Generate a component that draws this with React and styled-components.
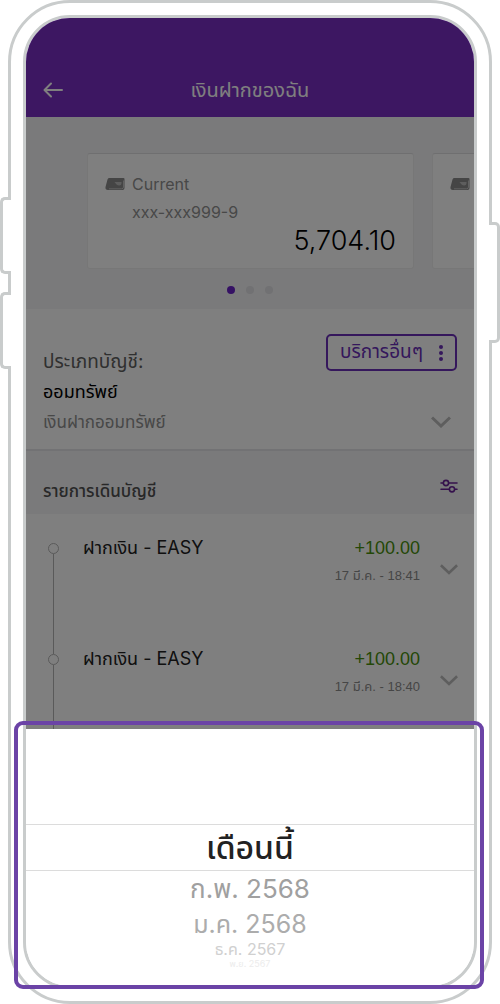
import React from "react";
import styled, { createGlobalStyle } from "styled-components";

const GlobalStyle = createGlobalStyle`
  * {
    box-sizing: border-box;
  }

  body {
    margin: 0;
    background: #ffffff;
    font-family: Inter, "Noto Sans Thai", sans-serif;
  }

  h1, h2, p, ul {
    margin: 0;
    padding: 0;
    font-weight: 400;
  }

  ul {
    list-style: none;
  }

  button {
    padding: 0;
    border: 0;
    background: none;
    font: inherit;
    color: inherit;
    cursor: pointer;
  }

  svg {
    display: block;
  }
`;

const Phone = styled.div`
  position: relative;
  margin: 0 8px;
  padding: 12px;
  border: 3px solid #c9cccc;
  border-radius: 62px;
  background: #ffffff;
`;

const SideKey = styled.span`
  position: absolute;
  top: ${({ $top }) => $top}px;
  ${({ $side }) => $side}: -11px;
  width: 11px;
  height: ${({ $height }) => $height}px;
  border: 3px solid #c9cccc;
  border-${({ $side }) => ($side === "left" ? "right" : "left")}: 0;
  border-radius: ${({ $side }) =>
    $side === "left" ? "5px 0 0 5px" : "0 5px 5px 0"};
  background: #ffffff;
`;

const Screen = styled.div`
  border: 3px solid #c9cccc;
  border-radius: 47px;
  overflow: hidden;
`;

const Account = styled.main`
  position: relative;
`;

const Backdrop = styled.div`
  position: absolute;
  inset: 0;
  background: rgba(0, 0, 0, 0.5);
`;

const Header = styled.header`
  display: grid;
  grid-template-columns: 46px 1fr 46px;
  align-items: center;
  height: 99px;
  padding: 45px 4px 0;
  background: #7a2ec4;
  color: #ffffff;

  button {
    justify-self: center;
  }

  h1 {
    font-size: 20px;
    line-height: 28px;
    text-align: center;
  }
`;

const Carousel = styled.section`
  padding: 36px 0 15px 61px;
  background: #f4f4f7;
  overflow: hidden;
`;

const Cards = styled.div`
  display: flex;
  gap: 18px;
`;

const Card = styled.article`
  flex: 0 0 84.5%;
  height: 116px;
  padding: 16px 17px 10px;
  border: 1px solid #eeeeee;
  border-top-color: #dedee0;
  border-radius: 3px;
  background: #ffffff;
`;

const CardName = styled.h2`
  display: flex;
  align-items: center;
  gap: 7px;
  min-height: 28px;
  font-size: 16px;
  line-height: 28px;
  color: #909090;
`;

const CardNumber = styled.p`
  padding-left: 27px;
  font-size: 16px;
  line-height: 28px;
  color: #909090;
`;

const Balance = styled.p`
  font-size: 27px;
  font-weight: 300;
  line-height: 30px;
  text-align: right;
  color: #000000;
`;

const Dots = styled.div`
  display: flex;
  justify-content: center;
  gap: 11px;
  padding: 17px 61px 0 0;
`;

const Dot = styled.span`
  width: 8px;
  height: 8px;
  border-radius: 50%;
  background: ${({ $active }) => ($active ? "#6a22c8" : "#e2e2e6")};
`;

const Type = styled.section`
  display: grid;
  grid-template-columns: 1fr auto;
  padding: 25px 17px 12px;
  border-bottom: 2px solid #e4e4e8;
  background: #ffffff;

  button {
    align-self: end;
    justify-self: end;
  }
`;

const TypeText = styled.p`
  font-size: ${({ $size }) => $size}px;
  line-height: 30px;
  color: ${({ $color }) => $color};
`;

const TypeNames = styled.div`
  padding-top: 13px;
`;

const TypeActions = styled.div`
  display: flex;
  flex-direction: column;
  justify-content: space-between;
`;

const Services = styled.button`
  && {
    display: flex;
    align-items: center;
    gap: 16px;
    height: 37px;
    padding: 0 12px;
    border: 2px solid #6a2fb8;
    border-radius: 5px;
    font-size: 19px;
    color: #6a2fb8;
  }
`;

const Expand = styled.button`
  && {
    padding: 9px 6px;
  }
`;

const ListHead = styled.div`
  display: flex;
  align-items: center;
  justify-content: space-between;
  height: 63px;
  padding: 16px 16px 0 17px;
  background: #f4f4f7;

  h2 {
    font-size: 17px;
    font-weight: 500;
    line-height: 28px;
    color: #505050;
  }

  button {
    padding-bottom: 10px;
  }
`;

const Transactions = styled.ul`
  height: 215px;
  padding: 20px 16px 0 23px;
  background: #ffffff;
  overflow: hidden;
`;

const Transaction = styled.li`
  display: grid;
  grid-template-columns: 9px 1fr auto 18px;
  column-gap: 20px;
  height: 111px;
  line-height: 28px;
  font-size: 18px;
  color: #202020;

  > p {
    padding-left: 5px;
  }

  > button {
    align-self: start;
    padding-top: 30px;
  }
`;

const Rail = styled.span`
  display: flex;
  flex-direction: column;
  align-items: center;
  padding-top: 9px;
  margin-bottom: -9px;

  &::before {
    content: "";
    width: 9px;
    height: 9px;
    border: 1px solid #b4b4b4;
    border-radius: 50%;
  }

  &::after {
    content: "";
    flex: 1;
    width: 1px;
    background: #b4b4b4;
  }
`;

const Amount = styled.div`
  font-family: "Liberation Sans", "Noto Sans Thai", sans-serif;
  text-align: right;
  color: #48900c;

  time {
    display: block;
    font-size: 13px;
    color: #8c8c8c;
  }
`;

const Sheet = styled.section`
  height: 257px;
  padding-top: 95px;
  background: #ffffff;
  text-align: center;
`;

const Month = styled.button`
  && {
    display: block;
    width: 100%;
    height: ${({ $height }) => $height}px;
    font-size: ${({ $size }) => $size}px;
    line-height: ${({ $height }) => $height}px;
    color: ${({ $color }) => $color};
  }

  &&[aria-selected="true"] {
    border: solid #dcdcdc;
    border-width: 1px 0;
    font-weight: 500;
    line-height: 45px;
  }
`;

// outline around the month picker
const Highlight = styled.div`
  position: absolute;
  left: 3px;
  right: 5px;
  bottom: 12px;
  height: 268px;
  border: 4px solid #6b43a6;
  border-radius: 9px;
  pointer-events: none;
`;

const transactions = [
  { id: 1, name: "ฝากเงิน - EASY", amount: "+100.00", date: "17 มี.ค. - 18:41" },
  { id: 2, name: "ฝากเงิน - EASY", amount: "+100.00", date: "17 มี.ค. - 18:40" },
];

const months = [
  { label: "เดือนนี้", height: 47, size: 32, color: "#222222" },
  { label: "ก.พ. 2568", height: 36, size: 26, color: "#a0a0a0" },
  { label: "ม.ค. 2568", height: 34, size: 25, color: "#acacac" },
  { label: "ธ.ค. 2567", height: 16, size: 16, color: "#d0d0d0" },
  { label: "พ.ย. 2567", height: 14, size: 9, color: "#ececec" },
];

const BackIcon = () => (
  <svg width="20" height="16" viewBox="0 0 20 16" fill="none" stroke="currentColor" strokeWidth="2" strokeLinecap="round" strokeLinejoin="round">
    <path d="M19 8H1.5M8 1.5L1.5 8L8 14.5" />
  </svg>
);

const CardIcon = () => (
  <svg width="20" height="14" viewBox="0 0 20 14">
    <path d="M4 1H18.5Q19.5 1 19.5 2V11Q19.5 13 17.5 13H3Q0 13 0.5 10L2.5 2.5Q2.8 1 4 1Z" fill="#8a8a8a" />
    <path d="M4 11.8H16.5Q18.5 11.8 18.5 10V3.5" fill="none" stroke="#d0d0d0" strokeWidth="0.8" />
    <path d="M9.5 5H16.5Q16.8 8.5 14 8.5Q12 8.5 9.5 5Z" fill="#bdbdbd" />
  </svg>
);

const ChevronIcon = ({ size }) => (
  <svg width={size} height={size * 0.6} viewBox="0 0 20 12" fill="none" stroke="#bcbcbc" strokeWidth="3">
    <path d="M1 1.5L10 10L19 1.5" />
  </svg>
);

const MoreIcon = () => (
  <svg width="4" height="16" viewBox="0 0 4 16" fill="currentColor">
    <circle cx="2" cy="2" r="2" />
    <circle cx="2" cy="8" r="2" />
    <circle cx="2" cy="14" r="2" />
  </svg>
);

const FilterIcon = () => (
  <svg width="18" height="14" viewBox="0 0 18 14" fill="none" stroke="#6a2298" strokeWidth="1.6" strokeLinecap="round">
    <path d="M1 4H3.2M8.8 4H17M1 10.3H9.2M14.8 10.3H17" />
    <circle cx="6" cy="4" r="2.6" />
    <circle cx="12" cy="10.3" r="2.6" />
  </svg>
);

const App = () => {
  return (
    <>
      <GlobalStyle />
      <Phone>
        <SideKey $side="left" $top={194} $height={77} />
        <SideKey $side="left" $top={289} $height={77} />
        <SideKey $side="right" $top={219} $height={121} />

        <Screen>
          <Account>
            <Header>
              <button aria-label="กลับ">
                <BackIcon />
              </button>
              <h1>เงินฝากของฉัน</h1>
            </Header>

            <Carousel>
              <Cards>
                <Card>
                  <CardName>
                    <CardIcon /> Current
                  </CardName>
                  <CardNumber>xxx-xxx999-9</CardNumber>
                  <Balance>5,704.10</Balance>
                </Card>
                <Card>
                  <CardName>
                    <CardIcon />
                  </CardName>
                </Card>
              </Cards>
              <Dots>
                <Dot $active />
                <Dot />
                <Dot />
              </Dots>
            </Carousel>

            <Type>
              <TypeNames>
                <TypeText $size={19} $color="#606060">ประเภทบัญชี:</TypeText>
                <TypeText $size={18} $color="#000000">ออมทรัพย์</TypeText>
                <TypeText $size={17} $color="#909090">เงินฝากออมทรัพย์</TypeText>
              </TypeNames>
              <TypeActions>
                <Services>
                  บริการอื่นๆ <MoreIcon />
                </Services>
                <Expand aria-label="เงินฝากออมทรัพย์">
                  <ChevronIcon size={20} />
                </Expand>
              </TypeActions>
            </Type>

            <ListHead>
              <h2>รายการเดินบัญชี</h2>
              <button aria-label="รายการเดินบัญชี">
                <FilterIcon />
              </button>
            </ListHead>

            <Transactions>
              {transactions.map(({ id, name, amount, date }) => (
                <Transaction key={id}>
                  <Rail />
                  <p>{name}</p>
                  <Amount>
                    {amount}
                    <time>{date}</time>
                  </Amount>
                  <button aria-label={date}>
                    <ChevronIcon size={18} />
                  </button>
                </Transaction>
              ))}
            </Transactions>
            <Backdrop />
          </Account>

          <Sheet role="listbox">
            {months.map(({ label, height, size, color }, index) => (
              <Month
                key={label}
                role="option"
                aria-selected={index === 0}
                $height={height}
                $size={size}
                $color={color}
              >
                {label}
              </Month>
            ))}
          </Sheet>
        </Screen>
        <Highlight />
      </Phone>
    </>
  );
};

export default App;
